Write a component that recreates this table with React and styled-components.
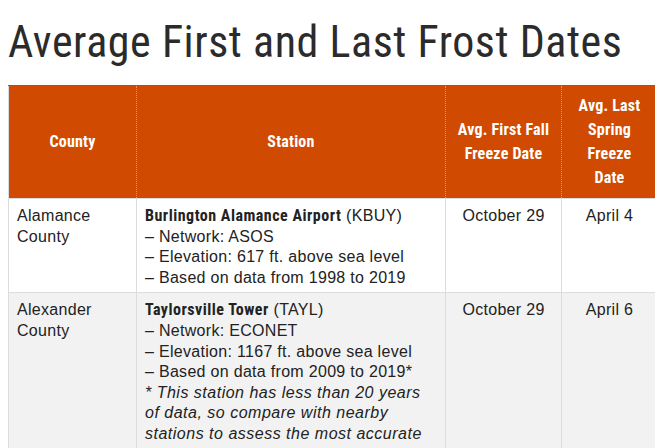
import React from "react";
import styled, { createGlobalStyle } from "styled-components";

const Global = createGlobalStyle`
  html, body { margin: 0; padding: 0; background: #fff; overflow: hidden; }
  body { font-family: "Liberation Sans", Arial, sans-serif; color: #222; }
`;

const narrow = `"Liberation Sans Narrow", "Arial Narrow", "Roboto Condensed", "DejaVu Sans Condensed", sans-serif`;

const Page = styled.main`
  padding: 16px 0 0 8px;
  width: 649px;
`;

const Title = styled.h1`
  margin: 0 0 17px 0;
  font-family: ${narrow};
  font-weight: 400;
  font-size: 44px;
  line-height: 52px;
  letter-spacing: 0.55px;
  color: #2b2b2b;
  white-space: nowrap;
`;

const Table = styled.table`
  width: 649px;
  border-collapse: collapse;
  table-layout: fixed;
  border: 1px solid #dcdcdc;
  font-size: 16px;
  line-height: 20.6px;
  letter-spacing: 0.3px;
`;

const HeadRow = styled.tr`
  background: #d04a02;
`;

const Th = styled.th`
  font-family: ${narrow};
  font-weight: 700;
  font-size: 16px;
  line-height: 24px;
  letter-spacing: 0.2px;
  color: #fff;
  text-align: center;
  vertical-align: middle;
  padding: 8px 10px;
  height: 96px;
  border-left: 1px dotted #e8956a;
  border-right: 1px dotted #e8956a;
  border-top: 1px solid #b84a14;
`;

const Row = styled.tr`
  background: ${(p) => (p.$shade ? "#f2f2f2" : "#fff")};
  border-top: 1px solid #dcdcdc;
`;

const Td = styled.td`
  vertical-align: top;
  padding: 7px ${(p) => (p.$wide ? "10px" : "8px")} 4px 8px;
  text-align: ${(p) => (p.$center ? "center" : "left")};
  border-left: 1px solid #dcdcdc;
  border-right: 1px solid #dcdcdc;
`;

const StationName = styled.strong`
  font-family: ${narrow};
  font-weight: 700;
  font-size: 16px;
  letter-spacing: 0.5px;
`;

const Line = styled.div``;

const Note = styled.div`
  font-style: italic;
  letter-spacing: 0.5px;
`;

const rows = [
  {
    county: ["Alamance", "County"],
    name: "Burlington Alamance Airport",
    code: "KBUY",
    network: "ASOS",
    elevation: "617",
    years: "1998 to 2019",
    first: "October 29",
    last: "April 4",
  },
  {
    county: ["Alexander", "County"],
    name: "Taylorsville Tower",
    code: "TAYL",
    network: "ECONET",
    elevation: "1167",
    years: "2009 to 2019*",
    note: "* This station has less than 20 years of data, so compare with nearby stations to assess the most accurate freeze dates for your location.",
    first: "October 29",
    last: "April 6",
  },
];

export default function App() {
  return (
    <>
      <Global />
      <Page>
        <Title>Average First and Last Frost Dates</Title>
        <Table>
          <colgroup>
            <col style={{ width: "128px" }} />
            <col style={{ width: "309px" }} />
            <col style={{ width: "116px" }} />
            <col style={{ width: "96px" }} />
          </colgroup>
          <thead>
            <HeadRow>
              <Th>County</Th>
              <Th>Station</Th>
              <Th>Avg. First Fall Freeze Date</Th>
              <Th>Avg. Last Spring Freeze Date</Th>
            </HeadRow>
          </thead>
          <tbody>
            {rows.map((r, i) => (
              <Row key={r.code} $shade={i % 2 === 1}>
                <Td>
                  {r.county[0]}
                  <br />
                  {r.county[1]}
                </Td>
                <Td $wide>
                  <Line>
                    <StationName>{r.name}</StationName> ({r.code})
                  </Line>
                  <Line>– Network: {r.network}</Line>
                  <Line>– Elevation: {r.elevation} ft. above sea level</Line>
                  <Line>– Based on data from {r.years}</Line>
                  {r.note && <Note>{r.note}</Note>}
                </Td>
                <Td $center>{r.first}</Td>
                <Td $center>{r.last}</Td>
              </Row>
            ))}
          </tbody>
        </Table>
      </Page>
    </>
  );
}
